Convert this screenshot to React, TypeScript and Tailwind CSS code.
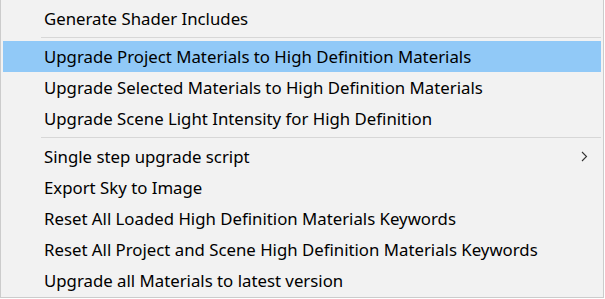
import { ReactNode } from 'react'

type Item = { label: string; active?: boolean; submenu?: boolean }

const groups: Item[][] = [
  [{ label: 'Generate Shader Includes' }],
  [
    { label: 'Upgrade Project Materials to High Definition Materials', active: true },
    { label: 'Upgrade Selected Materials to High Definition Materials' },
    { label: 'Upgrade Scene Light Intensity for High Definition' },
  ],
  [
    { label: 'Single step upgrade script', submenu: true },
    { label: 'Export Sky to Image' },
    { label: 'Reset All Loaded High Definition Materials Keywords' },
    { label: 'Reset All Project and Scene High Definition Materials Keywords' },
    { label: 'Upgrade all Materials to latest version' },
  ],
]

function Chevron() {
  return (
    <svg width="7" height="11" viewBox="0 0 7 11" className="shrink-0">
      <path d="M1 1 L5.5 5.5 L1 10" fill="none" stroke="#333" strokeWidth="1.1" />
    </svg>
  )
}

function MenuItem({ item }: { item: Item }) {
  return (
    <div
      className={`h-[31px] mx-[2px] flex items-center pl-[41px] pr-[13px] ${
        item.active ? 'bg-[#91c9f7]' : ''
      }`}
    >
      <span className="flex-1 whitespace-nowrap">{item.label}</span>
      {item.submenu && <Chevron />}
    </div>
  )
}

function Separator(): ReactNode {
  return (
    <div className="py-[3px] pl-[40px] pr-[2px]">
      <div className="h-px bg-[#d7d7d7]" />
    </div>
  )
}

export default function App() {
  return (
    <div className="w-[605px] h-[299px] bg-white">
      <div
        className="w-[604px] h-[298px] bg-[#f2f2f2] border-l border-r border-b border-[#cccccc] pt-[3px] text-[16.8px] text-black"
        style={{ fontFamily: '"Noto Sans", "Open Sans", sans-serif' }}
      >
        {groups.map((group, gi) => (
          <div key={gi}>
            {gi > 0 && <Separator />}
            {group.map((item) => (
              <MenuItem key={item.label} item={item} />
            ))}
          </div>
        ))}
      </div>
    </div>
  )
}
